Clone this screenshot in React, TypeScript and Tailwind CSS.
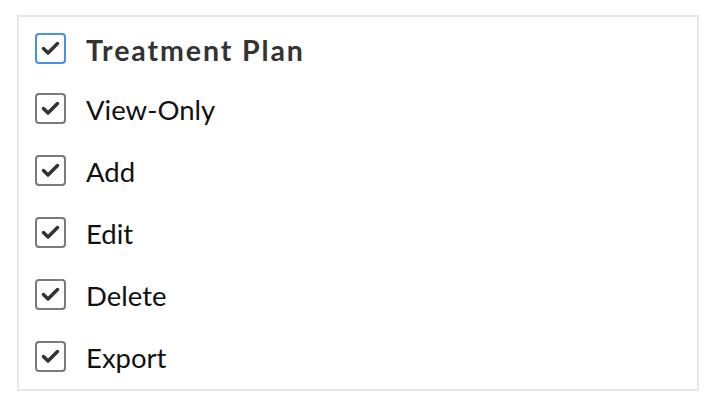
import React from "react";

const Check = ({ blue }: { blue?: boolean }) => (
  <div
    className={`w-[31px] h-[31px] shrink-0 rounded-[4px] border-2 flex items-center justify-center bg-white ${
      blue ? "border-[#4a90e2]" : "border-[#7a7a7a]"
    }`}
  >
    <svg width="21" height="21" viewBox="0 0 21 21">
      <path d="M3.5 10.5 L8 15 L17.5 5.5" fill="none" stroke="#333" strokeWidth="3.5" strokeLinecap="round" strokeLinejoin="round" />
    </svg>
  </div>
);

const items = ["View-Only", "Add", "Edit", "Delete", "Export"];

export default function App() {
  return (
    <div className="w-[722px] h-[416px] bg-white pt-[15px] pl-[17px]" style={{ fontFamily: "Lato, 'Open Sans', sans-serif" }}>
      <div className="w-[682px] h-[376px] border-2 border-[#e6e6e6] pt-[16px] pl-[16px] flex flex-col">
        <div className="flex items-center h-[31px]">
          <Check blue />
          <span className="ml-[20px] mt-[4px] text-[28.5px] font-bold tracking-[1.9px] text-[#333] leading-none">Treatment Plan</span>
        </div>
        <div className="flex flex-col gap-[31px] mt-[29px]">
          {items.map((t) => (
            <div key={t} className="flex items-center h-[31px]">
              <Check />
              <span className="ml-[20px] mt-[3px] text-[27.5px] text-[#111] leading-none">{t}</span>
            </div>
          ))}
        </div>
      </div>
    </div>
  );
}
